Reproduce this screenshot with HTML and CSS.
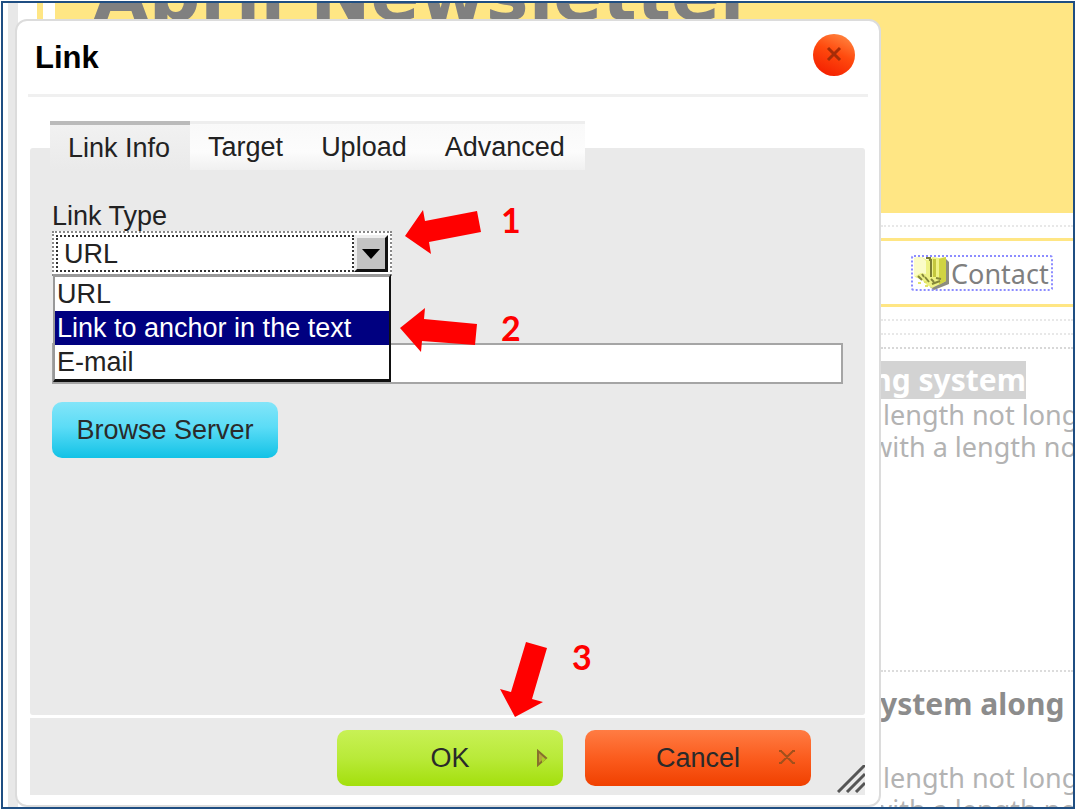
FILE: index.html
```html
<!DOCTYPE html>
<html lang="en">
<head>
<meta charset="utf-8">
<title>Link</title>
<link rel="stylesheet" href="styles.css">
</head>
<body>
<main class="page">
  <header class="banner"><h1 class="banner-title">Abril Newsletter</h1></header>

  <aside class="newsletter">
    <nav class="menu">
      <a class="contact" href="#contact">
        <svg width="36" height="34" viewBox="0 0 36 34" aria-hidden="true">
          <path d="M32 2l4 4v22l-15 6-4-3z" fill="#8d8d80"/>
          <path d="M1 2l8-1 5 3 6-3 6 1 7-1v24l-14 7-5-3-5-5-7-3z" fill="#eef285"/>
          <path d="M1 2l8-1 4 4v13l-5-1-7 4z" fill="#fbfcc8"/>
          <path d="M26 3l7-2v24l-7 4z" fill="#d0d443"/>
          <path d="M20 3h3v18h-3z" fill="#c4c73f"/>
          <path d="M13 2h4v3M18 3v18" fill="none" stroke="#7b7d35" stroke-width="2"/>
          <path d="M5 20l4 4m3-3l4 5m2-3l3 3m2-4l5 1m-9 5l8-3M9 18l2 3" fill="none" stroke="#85873a" stroke-width="2"/>
          <path d="M5 27h3m3-1h3m-2 4h3" stroke="#e2e46a" stroke-width="2"/>
        </svg>
        <span>Contact</span>
      </a>
    </nav>
    <div class="rule"></div>
    <div class="rule"></div>
    <div class="rule rule-strong"></div>
    <section class="article">
      <div class="marked"><h2 class="marked-title">ing system</h2></div>
      <p class="copy">length not long</p>
      <p class="copy copy-cut">with a length no</p>
    </section>
    <section class="article article-next">
      <h2 class="article-title">system along</h2>
      <p class="copy">length not long</p>
      <p class="copy copy-cut">with a length no</p>
    </section>
  </aside>

  <section class="dialog" role="dialog" aria-labelledby="dialog-title">
    <header class="dialog-head">
      <h2 class="dialog-title" id="dialog-title">Link</h2>
      <button class="close" type="button" aria-label="Close">
        <svg width="16" height="16" viewBox="0 0 16 16"><path d="M2 2l12 12M14 2L2 14" stroke="#a52c08" stroke-width="3"/></svg>
      </button>
    </header>

    <div class="tabs" role="tablist">
      <button class="tab tab-active" type="button" role="tab" aria-selected="true">Link Info</button>
      <button class="tab" type="button" role="tab">Target</button>
      <button class="tab" type="button" role="tab">Upload</button>
      <button class="tab" type="button" role="tab">Advanced</button>
    </div>

    <form class="panel">
      <label class="label" for="link-type">Link Type</label>
      <div class="combo">
        <select class="combo-select" id="link-type">
          <option>URL</option>
          <option>Link to anchor in the text</option>
          <option>E-mail</option>
        </select>
        <span class="combo-button">
          <svg width="18" height="10" viewBox="0 0 18 10" aria-hidden="true"><path d="M0 0h18L9 10z" fill="#000"/></svg>
        </span>
        <ul class="options" role="listbox" aria-label="Link Type">
          <li class="option" role="option">URL</li>
          <li class="option option-active" role="option" aria-selected="true">Link to anchor in the text</li>
          <li class="option" role="option">E-mail</li>
        </ul>
      </div>
      <input class="url" type="text" aria-label="URL">
      <button class="button browse" type="button">Browse Server</button>
    </form>

    <footer class="dialog-foot">
      <button class="button ok" type="button">OK
        <svg class="button-icon" width="12" height="18" viewBox="0 0 12 18" aria-hidden="true"><path d="M2 2v14l8-7z" fill="#b5a83c" stroke="#87702c" stroke-width="2"/><path d="M6 8v6l4-4z" fill="#a9cf24"/></svg>
      </button>
      <button class="button cancel" type="button">Cancel
        <svg class="button-icon" width="18" height="16" viewBox="0 0 18 16" aria-hidden="true"><path d="M1 2h3M14 2h3M1 14h3M14 14h3M3 2l12 12M15 2L3 14" fill="none" stroke="#a1501c" stroke-width="2"/></svg>
      </button>
      <svg class="resizer" width="28" height="28" viewBox="0 0 28 28" aria-hidden="true"><path d="M1 27L28 0M10 27L28 9M19 27l9-9" stroke="#555" stroke-width="3"/></svg>
    </footer>
  </section>

  <svg class="steps" width="600" height="730" viewBox="0 0 600 730">
    <g fill="#f00">
      <path d="M405 236L423 210 425 221 477 211 481 232 429 242 431 254z"/>
      <path d="M400 328L425 308 424 319 477 324 475 345 422 341 421 352z"/>
      <path d="M526 642L547 648 532 699 543 702 515 717 500 689 511 692z"/>
      <text class="step" x="501" y="233">1</text>
      <text class="step" x="501" y="341">2</text>
      <text class="step" x="572" y="670">3</text>
    </g>
  </svg>
</main>
</body>
</html>
```

FILE: styles.css
```css
* { box-sizing: border-box; }

body {
  margin: 0;
  padding: 1px;
  background: #fff;
  color: #222;
  font-family: "Liberation Sans", Arial, sans-serif;
  font-size: 27px;
}

h1, h2, p, ul { margin: 0; padding: 0; }
button, select, input { font: inherit; color: inherit; }

.page {
  display: grid;
  grid-template-columns: minmax(0, 1fr) 192px;
  grid-template-rows: minmax(0, 1fr);
  height: calc(100vh - 2px);
  min-height: 640px;
  border: 2px solid #1f4e82;
  overflow: hidden;
  background: linear-gradient(90deg, #fff 5px, #e8e8e8 5px, #e8e8e8 15px, #fff 15px);
}

/* Newsletter behind the dialog */
.banner {
  grid-area: 1 / 1 / 2 / 3;
  align-self: start;
  height: 210px;
  margin-left: 34px;
  padding-left: 56px;
  overflow: hidden;
  background: linear-gradient(90deg, #ffe684 6px, #fff 6px, #fff 18px, #ffe684 18px);
}

.banner-title {
  margin-top: -44px;
  color: #808080;
  font: bold 72px/72px "DejaVu Sans", Verdana, sans-serif;
  white-space: nowrap;
}

.newsletter {
  grid-area: 1 / 2;
  min-width: 0;
  padding-top: 222px;
  overflow: hidden;
  font-family: "Noto Sans", Tahoma, sans-serif;
  white-space: nowrap;
  color: #b3b3b3;
}

.menu {
  height: 82px;
  margin-bottom: 12px;
  padding: 28px 20px 0 30px;
  border-top: 2px dotted #e8e8e8;
  border-bottom: 3px solid #ffe684;
  background: linear-gradient(#ffe684, #ffe684) 0 11px / 100% 3px no-repeat;
}

.contact {
  display: flex;
  align-items: center;
  gap: 2px;
  height: 36px;
  border: 2px dotted #8c8cff;
  border-radius: 3px;
  color: #7f7f7f;
  text-decoration: none;
}

.rule {
  height: 2px;
  margin-bottom: 12px;
  border-top: 2px dotted #e8e8e8;
}
.rule-strong { border-color: #d8d8d8; }

.marked {
  display: flex;
  justify-content: flex-end;
  margin-right: 47px;
  background: #d3d3d3;
  color: #fff;
}
.marked-title { font-size: 30px; line-height: 38px; }

.copy { padding-left: 2px; line-height: 32px; }
.copy-cut { margin-left: -12px; }

.article { height: 309px; }
.article-next { border-top: 2px dotted #dcdcdc; padding-top: 14px; }
.article-title {
  margin: 0 0 40px -16px;
  color: #8c8c8c;
  font-size: 30px;
  line-height: 36px;
}

/* Dialog */
.dialog {
  grid-area: 1 / 1;
  z-index: 1;
  display: flex;
  flex-direction: column;
  min-height: 0;
  margin: 16px 0 0 12px;
  padding: 0 14px 10px 13px;
  border: 2px solid #dcdcdc;
  border-radius: 12px;
  background: #fff;
}

.dialog-head {
  display: flex;
  justify-content: space-between;
  align-items: center;
  height: 76px;
  margin: 0 -3px 0 -2px;
  padding: 0 13px 6px 7px;
  border-bottom: 3px solid #f0f0f0;
}

.dialog-title {
  padding-top: 6px;
  color: #000;
  font-size: 31px;
  line-height: 36px;
}

.close {
  display: grid;
  place-items: center;
  width: 42px;
  height: 42px;
  padding: 0 0 2px;
  border: 0;
  border-radius: 50%;
  background: linear-gradient(205deg, #ff8a44 5%, #ff4a0e 45%, #f41f00 90%);
}

.tabs {
  z-index: 1;
  display: flex;
  align-self: flex-start;
  margin: 24px 0 -22px 20px;
}

.tab {
  height: 49px;
  padding: 1px 20px 0 18px;
  border: 0;
  border-top: 3px solid #eee;
  background: linear-gradient(#f9f9f9, #fcfcfc 60%, #f0f0f0);
}
.tab-active {
  border-top: 4px solid #bababa;
  background: linear-gradient(#f1f1f1, #eaeaea);
}

.panel {
  flex: 1;
  display: flex;
  flex-direction: column;
  align-items: flex-start;
  padding: 53px 22px 20px;
  border-radius: 3px;
  background: #eaeaea;
}

.label { line-height: 30px; }

.combo {
  position: relative;
  display: flex;
  width: 340px;
  height: 45px;
  padding: 2px;
  border: 2px dotted #888;
  background: #fff;
}

.combo-select {
  flex: 1;
  min-width: 0;
  padding: 0 6px;
  border: 2px dotted #333;
  border-radius: 0;
  outline: 0;
  appearance: none;
  background: #fff;
}

.combo-button {
  display: grid;
  place-items: center;
  width: 34px;
  border: solid;
  border-width: 3px;
  border-color: #eee #111 #111 #eee;
  background: #c3c3c3;
  pointer-events: none;
}

.options {
  position: absolute;
  top: 41px;
  left: -1px;
  right: -1px;
  z-index: 2;
  border: solid;
  border-width: 3px 2px;
  border-color: #999 #111 #111 #999;
  background: #fff;
  list-style: none;
}
.option { padding-left: 2px; line-height: 34px; white-space: nowrap; }
.option-active { background: #000080; color: #fff; }

.url {
  width: 100%;
  height: 41px;
  margin: 67px 0 18px;
  padding: 0 8px;
  border: 2px solid #a5a5a5;
  background: #fff;
}

.button {
  height: 56px;
  width: 226px;
  padding: 1px 0 0;
  border: 0;
  border-radius: 10px;
  color: #2a2a2a;
}
.browse { background: linear-gradient(#83e5f9, #5bdcf6 45%, #12c2e6); }

.dialog-foot {
  position: relative;
  display: flex;
  justify-content: flex-end;
  gap: 22px;
  margin-top: 3px;
  padding: 12px 54px 9px 20px;
  background: #eaeaea;
}
.ok, .cancel { position: relative; }
.ok { background: linear-gradient(#c8f155, #b9ea39 50%, #a3df0c); }
.cancel { background: linear-gradient(#ff7c43, #fb5c1e 50%, #f04000); }

.button-icon { position: absolute; top: 19px; right: 15px; }
.resizer { position: absolute; right: 0; bottom: 2px; }

/* Numbered arrows over the dialog */
.steps {
  position: absolute;
  top: 0;
  left: 0;
  z-index: 3;
  pointer-events: none;
}
.step { font: bold 34px Lato, sans-serif; }
```
